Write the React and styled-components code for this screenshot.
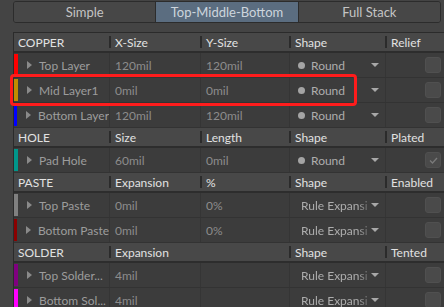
import styled, { createGlobalStyle } from "styled-components"

const GlobalStyle = createGlobalStyle`
  html, body {
    margin: 0;
    background: #444444;
    overflow: hidden;
    font-family: Lato, "Open Sans", sans-serif;
  }
`

// 섹션별 데이터
const sections = [
  {
    title: "COPPER",
    cols: ["X-Size", "Y-Size", "Shape", "Relief"],
    rows: [
      { name: "Top Layer", color: "#ff0000", a: "120mil", b: "120mil", shape: "round" },
      { name: "Mid Layer1", color: "#c28c00", a: "0mil", b: "0mil", shape: "round" },
      { name: "Bottom Layer", color: "#0000ff", a: "120mil", b: "120mil", shape: "round" },
    ],
  },
  {
    title: "HOLE",
    cols: ["Size", "Length", "Shape", "Plated"],
    rows: [{ name: "Pad Hole", color: "#00968a", a: "60mil", b: "0mil", shape: "round", checked: true }],
  },
  {
    title: "PASTE",
    cols: ["Expansion", "%", "Shape", "Enabled"],
    rows: [
      { name: "Top Paste", color: "#808080", a: "0mil", b: "0%", shape: "rule" },
      { name: "Bottom Paste", color: "#8b0000", a: "0mil", b: "0%", shape: "rule" },
    ],
  },
  {
    title: "SOLDER",
    cols: ["Expansion", "", "Shape", "Tented"],
    rows: [
      { name: "Top Solder...", color: "#800080", a: "4mil", b: "", shape: "rule" },
      { name: "Bottom Sol...", color: "#ff00ff", a: "4mil", b: "", shape: "rule" },
    ],
  },
]

const tabs = ["Simple", "Top-Middle-Bottom", "Full Stack"]

const App = () => {
  return (
    <Page>
      <GlobalStyle />
      <TabBar>
        {tabs.map((t, i) => (
          <Tab key={t} $active={i === 1}>{t}</Tab>
        ))}
      </TabBar>

      <Table>
        {sections.map((s) => (
          <Section key={s.title}>
            <HeaderRow>
              <HeadCell>{s.title}</HeadCell>
              {s.cols.map((c, i) => (
                <HeadCell key={i} $sep={c !== ""}>{c}</HeadCell>
              ))}
            </HeaderRow>
            {s.rows.map((r) => (
              <DataRow key={r.name}>
                <NameCell>
                  <ColorBar $color={r.color} />
                  <Expander />
                  <span>{r.name}</span>
                </NameCell>
                <ValueCell>{r.a}</ValueCell>
                <ValueCell>{r.b}</ValueCell>
                <ShapeCell>
                  {r.shape === "round" ? (
                    <ShapeValue>
                      <Dot />
                      Round
                    </ShapeValue>
                  ) : (
                    <RuleValue>Rule Expansi</RuleValue>
                  )}
                  <DropArrow />
                </ShapeCell>
                <CheckCell>
                  <CheckBox>
                    {r.checked && (
                      <svg width="11" height="11" viewBox="0 0 11 11">
                        <path d="M2 5.5 L4.5 8 L9 3" fill="none" stroke="#7a7a7a" strokeWidth="1.3" />
                      </svg>
                    )}
                  </CheckBox>
                </CheckCell>
              </DataRow>
            ))}
          </Section>
        ))}
        {/* 선택 표시 박스 */}
        <Highlight />
      </Table>
    </Page>
  )
}
export default App

const Page = styled.div`
  padding: 1px 0 0 13px;
`

const TabBar = styled.div`
  display: flex;
  height: 20px;
  margin-right: 3px;
  border: 1px solid #2c2c2c;
  border-radius: 3px;
  overflow: hidden;
`

const Tab = styled.div`
  flex: 1;
  display: flex;
  align-items: center;
  justify-content: center;
  font-size: 13px;
  color: ${(p) => (p.$active ? "#cdd5dd" : "#c4c4c4")};
  background: ${(p) => (p.$active ? "#5b6d80" : "#474747")};
  & + & {
    border-left: 1px solid #2c2c2c;
  }
`

const Table = styled.div`
  position: relative;
  margin-top: 9px;
  border-top: 1px solid #2b2b2b;
  border-left: 1px solid #2b2b2b;
`

const Section = styled.div``

const grid = `
  display: grid;
  grid-template-columns: 95px 91px 89px 96px 1fr;
`

const HeaderRow = styled.div`
  ${grid}
  height: 18px;
  background: #484848;
  border-bottom: 2px solid #2d2d2d;
`

const HeadCell = styled.div`
  position: relative;
  display: flex;
  align-items: center;
  padding-left: ${(p) => (p.$sep ? "6px" : "4px")};
  font-size: 12px;
  color: #e2e2e2;
  white-space: nowrap;

  &::before {
    content: "";
    display: ${(p) => (p.$sep ? "block" : "none")};
    position: absolute;
    left: 0;
    top: 3px;
    width: 2px;
    height: 12px;
    background: #2b2b2b;
  }
`

const DataRow = styled.div`
  ${grid}
  height: 24px;
  background: #3c3c3c;
  border-bottom: 1px solid #333333;
`

const NameCell = styled.div`
  display: flex;
  align-items: center;
  font-size: 12px;
  color: #9c9c9c;
  white-space: nowrap;
  overflow: hidden;
`

const ColorBar = styled.div`
  align-self: stretch;
  width: 4px;
  margin: 1px 0;
  background: ${(p) => p.$color};
`

const Expander = styled.div`
  width: 0;
  height: 0;
  margin: 0 7px 0 9px;
  border-top: 4px solid transparent;
  border-bottom: 4px solid transparent;
  border-left: 5px solid #8a8a8a;
`

const ValueCell = styled.div`
  display: flex;
  align-items: center;
  padding-left: 5px;
  border-left: 1px solid #353535;
  font-size: 12px;
  color: #8c8c8c;
`

const ShapeCell = styled.div`
  display: flex;
  align-items: center;
  padding-left: 8px;
  border-left: 1px solid #353535;
  font-size: 12px;
  color: #adadad;
`

const ShapeValue = styled.div`
  display: flex;
  align-items: center;
  gap: 6px;
`

const Dot = styled.span`
  width: 7px;
  height: 7px;
  border-radius: 50%;
  background: #a4a4a4;
`

const RuleValue = styled.div`
  margin-left: 3px;
  white-space: nowrap;
  -webkit-mask-image: linear-gradient(to right, #000 85%, rgba(0, 0, 0, 0.35));
  mask-image: linear-gradient(to right, #000 85%, rgba(0, 0, 0, 0.35));
`

const DropArrow = styled.div`
  margin-left: auto;
  margin-right: 6px;
  width: 0;
  height: 0;
  border-left: 4px solid transparent;
  border-right: 4px solid transparent;
  border-top: 4px solid #a8a8a8;
`

const CheckCell = styled.div`
  display: flex;
  align-items: center;
  justify-content: flex-end;
  padding-right: 3px;
  border-left: 1px solid #353535;
`

const CheckBox = styled.div`
  width: 14px;
  height: 14px;
  display: flex;
  align-items: center;
  justify-content: center;
  background: #4a4a4a;
  border: 1px solid #505050;
  border-radius: 3px;
`

const Highlight = styled.div`
  position: absolute;
  left: -4px;
  top: 41px;
  width: 341px;
  height: 26px;
  border: 3px solid #ff1c1c;
  border-radius: 4px;
  pointer-events: none;
`
